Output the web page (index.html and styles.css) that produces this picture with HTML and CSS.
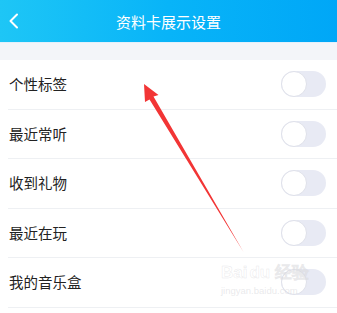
FILE: index.html
```html
<!DOCTYPE html>
<html lang="zh">
<head>
<meta charset="utf-8">
<link rel="stylesheet" href="styles.css">
</head>
<body>
<div class="page">
  <header class="topbar">
    <svg class="back" width="12" height="16" viewBox="0 0 12 16"><path d="M9 1.5 L2.5 8 L9 14.5" fill="none" stroke="#fff" stroke-width="2" stroke-linecap="round" stroke-linejoin="round"/></svg>
    <h1 class="title">资料卡展示设置</h1>
  </header>
  <div class="band"></div>
  <ul class="list">
    <li class="row"><span class="label">个性标签</span><span class="switch"><span class="knob"></span></span></li>
    <li class="row"><span class="label">最近常听</span><span class="switch"><span class="knob"></span></span></li>
    <li class="row"><span class="label">收到礼物</span><span class="switch"><span class="knob"></span></span></li>
    <li class="row"><span class="label">最近在玩</span><span class="switch"><span class="knob"></span></span></li>
    <li class="row"><span class="label">我的音乐盒</span><span class="switch"><span class="knob"></span></span></li>
  </ul>
  <svg class="arrow" width="337" height="313" viewBox="0 0 337 313">
    <path d="M144 84 L158.5 95 L153.5 96.5 L243.5 252 L149.5 99.5 L145 102 Z" fill="#f23535"/>
  </svg>
  <div class="watermark">
    <div class="wm-main">Bai<span class="wm-du">du</span> 经验</div>
    <div class="wm-sub">jingyan.baidu.com</div>
  </div>
</div>
</body>
</html>
```

FILE: styles.css
```css
* { box-sizing: border-box; }
html, body { margin: 0; padding: 0; }
body {
  background: #ffffff;
  font-family: "Noto Sans CJK SC", "Noto Sans", sans-serif;
  width: 337px;
  height: 313px;
  overflow: hidden;
}
.page {
  position: relative;
  width: 337px;
  height: 313px;
  overflow: hidden;
}
.topbar {
  height: 42px;
  background: linear-gradient(90deg, #1ec6f6 0%, #08b4f8 50%, #00a7f7 100%);
  display: flex;
  align-items: center;
  justify-content: center;
  position: relative;
}
.back {
  position: absolute;
  left: 8px;
  top: 13px;
}
.title {
  margin: 0;
  color: #ffffff;
  font-size: 15px;
  font-weight: 400;
  line-height: 1;
}
.band {
  height: 18px;
  background: #f3f5f9;
  border-top: 1px solid #e3f0fb;
}
.list {
  list-style: none;
  margin: 0;
  padding: 0 0 0 8px;
}
.row {
  height: 49.5px;
  border-bottom: 1px solid #eef0f3;
  display: flex;
  align-items: center;
  justify-content: space-between;
  padding: 0 11px 0 1px;
}
.label {
  font-size: 14.5px;
  color: #222222;
  line-height: 1;
}
.switch {
  width: 45px;
  height: 26px;
  border-radius: 13px;
  background: #e8eaf4;
  display: flex;
  align-items: center;
}
.knob {
  width: 26px;
  height: 26px;
  border-radius: 50%;
  background: #ffffff;
  border: 1px solid #dfe1ea;
}
.arrow {
  position: absolute;
  left: 0;
  top: 0;
}
.watermark {
  position: absolute;
  left: 221px;
  top: 264px;
  font-family: "Liberation Sans", sans-serif;
}
.wm-main {
  font-size: 17px;
  font-weight: 700;
  line-height: 1;
  -webkit-text-stroke: 0.5px rgba(205, 205, 210, 0.45);
  color: rgba(255, 255, 255, 0.35);
}
.wm-du { margin-left: 2px; }
.wm-sub {
  font-size: 9.5px;
  margin-top: 4px;
  color: rgba(215, 215, 220, 0.55);
}
```
